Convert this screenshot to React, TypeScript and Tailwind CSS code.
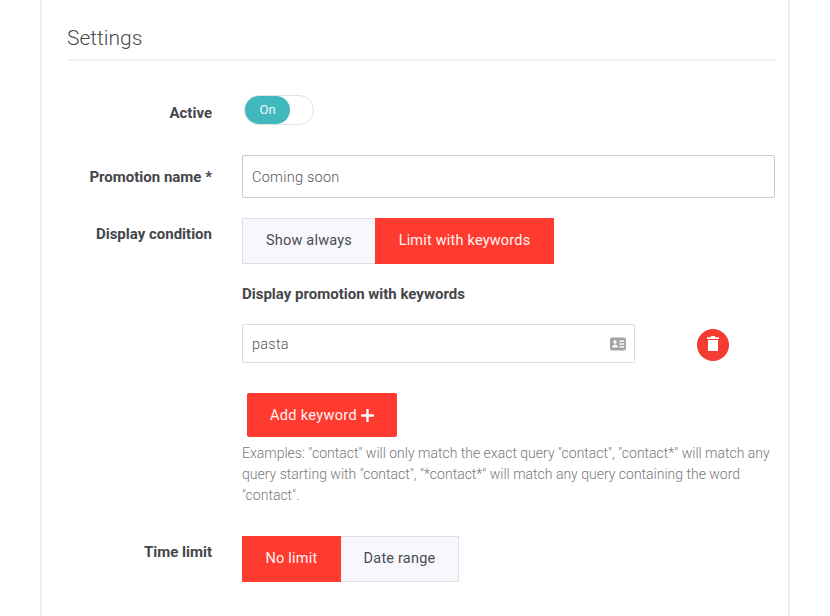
import React from "react";

function Row({ label, labelClass, children, className }: { label: string; labelClass: string; children: React.ReactNode; className: string }) {
  return (
    <div className={`flex ${className}`}>
      <div className={`w-[144px] shrink-0 text-right text-[15px] font-bold leading-[20px] text-[#45464b] ${labelClass}`}>{label}</div>
      <div className="ml-[30px] min-w-0 flex-1">{children}</div>
    </div>
  );
}

function Seg({ children, active, className }: { children: React.ReactNode; active?: boolean; className: string }) {
  return (
    <div
      className={`flex h-[46px] items-center justify-center text-[14.5px] tracking-[0.2px] ${className} ${
        active ? "bg-[#ff3b30] text-[#fff4f2]" : "border border-[#dedee2] bg-[#f8f8fc] text-[#4b4c54]"
      }`}
    >
      {children}
    </div>
  );
}

export default function App() {
  return (
    <div className="h-[616px] w-[830px] overflow-hidden bg-white font-['Roboto',sans-serif]">
      <div className="ml-[40px] h-[616px] w-[750px] border-x-2 border-[#eeeeee] pl-[26px] pr-[13px]">
        <div className="border-b-2 border-[#f0f0f0] pt-[25px] pb-[7px] text-[21px] font-light leading-[27px] text-[#4a4a4f]">
          <span className="-ml-[1px] block">Settings</span>
        </div>

        <Row label="Active" labelClass="pt-[42px]" className="">
          <div className="pt-[34px]">
            <div className="relative ml-[2px] h-[30px] w-[70px] rounded-full border border-[#e2e2e2] bg-white">
              <div className="absolute left-0 top-0 flex h-[28px] w-[45px] items-center justify-center rounded-full bg-[#40b8bd] text-[13px] text-[#e8f8f8]">On</div>
            </div>
          </div>
        </Row>

        <Row label="Promotion name *" labelClass="pt-[12px]" className="mt-[30px]">
          <div className="flex h-[43px] items-center rounded-[2px] border border-[#c9c9c9] px-[9px] pt-[2px] text-[14.5px] font-light tracking-[0.25px] text-[#55565a]">Coming soon</div>
        </Row>

        <Row label="Display condition" labelClass="pt-[6px]" className="mt-[20px]">
          <div className="flex">
            <Seg className="w-[133px] border-r-0">Show always</Seg>
            <Seg active className="w-[179px]">Limit with keywords</Seg>
          </div>
          <div className="mt-[20px] text-[15px] font-bold leading-[20px] text-[#45464b]">Display promotion with keywords</div>
          <div className="mt-[20px] flex items-center">
            <div className="flex h-[39px] w-[393px] items-center justify-between rounded-[2px] border border-[#dcdcdc] pl-[9px] pr-[8px] text-[14.5px] font-light tracking-[0.25px] text-[#55565a]">
              <span className="pt-[2px]">pasta</span>
              <svg width="16" height="14" viewBox="0 0 16 14" aria-hidden="true">
                <rect x="0" y="0.5" width="16" height="13" rx="2" fill="#a3a3a3" />
                <circle cx="5" cy="5" r="1.8" fill="#fff" />
                <path d="M2.2 10.5c0-2 1.2-3 2.8-3s2.8 1 2.8 3z" fill="#fff" />
                <rect x="9.2" y="3.4" width="5" height="1.4" fill="#fff" />
                <rect x="9.2" y="6.3" width="5" height="1.4" fill="#fff" />
                <rect x="9.2" y="9.2" width="5" height="1.4" fill="#fff" />
              </svg>
            </div>
            <div className="ml-[62px] mt-[3px] flex h-[32px] w-[32px] items-center justify-center rounded-full bg-[#f43c32]">
              <svg width="12" height="15" viewBox="0 0 12 15" aria-hidden="true" fill="#fff" className="-mt-[3px]">
                <path d="M4.2 0h3.6l.6 1.3H11.5a.5.5 0 0 1 .5.5v1.2H0V1.8a.5.5 0 0 1 .5-.5h3.1z" />
                <path d="M1 4h10v10a1 1 0 0 1-1 1H2a1 1 0 0 1-1-1z" />
              </svg>
            </div>
          </div>
          <div className="ml-[5px] mt-[30px] flex h-[44px] w-[150px] items-center justify-center gap-[4px] rounded-[2px] bg-[#ff3b30] pt-[1px] text-[14.5px] tracking-[0.35px] text-[#fff4f2]">
            <span>Add keyword</span>
            <svg width="13" height="13" viewBox="0 0 13 13" aria-hidden="true">
              <path d="M6.5 1v11M1 6.5h11" stroke="#fff" strokeWidth="2.4" strokeLinecap="round" />
            </svg>
          </div>
          <p className="mt-[6px] w-[533px] text-[14px] font-light leading-[21px] text-[#77787c]">
            Examples: "contact" will only match the exact query "contact", "contact*" will match any query starting with "contact", "*contact*" will match any query containing the word "contact".
          </p>
        </Row>

        <Row label="Time limit" labelClass="pt-[6px]" className="mt-[30px]">
          <div className="flex">
            <Seg active className="w-[99px]">No limit</Seg>
            <Seg className="w-[118px] border-l-0">Date range</Seg>
          </div>
        </Row>
      </div>
    </div>
  );
}
